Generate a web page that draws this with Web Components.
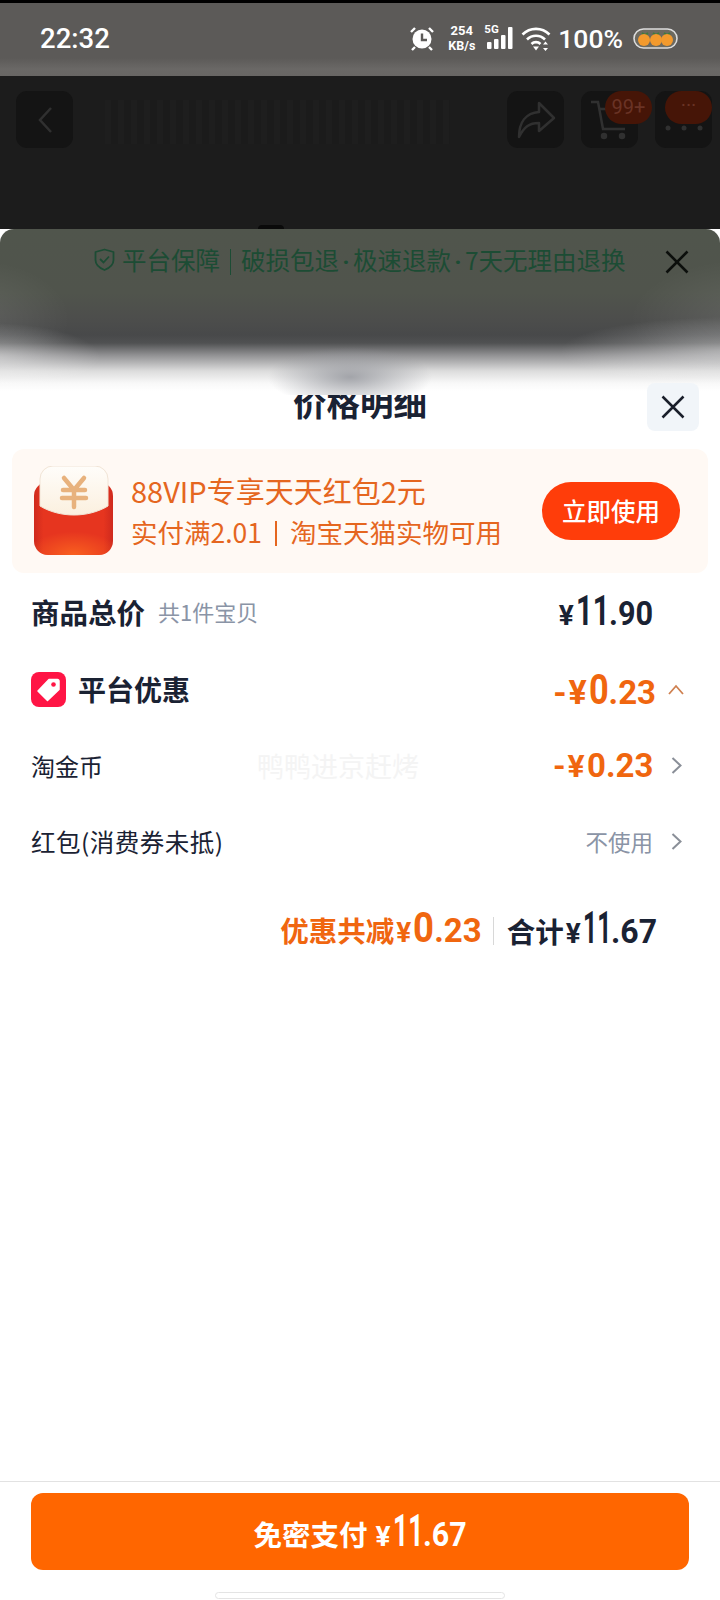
<!DOCTYPE html>
<html lang="zh">
<head>
<meta charset="utf-8">
<title>价格明细</title>
<style>
    html, body { margin: 0; padding: 0; background: #fff; }
    body { font-family: "Noto Sans CJK SC", "Noto Sans", sans-serif; }
    pay-page { width: 720px; height: 1600px; }
</style>
</head>
<body>
<pay-page>
    <status-bar></status-bar>
    <nav-bar></nav-bar>
    <guarantee-bar>平台保障</guarantee-bar>
    <price-sheet>
        <sheet-title>价格明细</sheet-title>
        <coupon-banner></coupon-banner>
        <price-row style="--row-size:28.5px;--row-weight:700;margin:-2px 0 2px">
            <span>商品总价</span>
            <span slot="note">共1件宝贝</span>
            <pay-amount slot="value" yen="¥" whole="11" decimal=".90" wholesize="42" decsize="33" yensize="28" kw=".69" kd=".93" color="#1a2233" style="margin-right:31px"></pay-amount>
        </price-row>
        <price-row style="--row-size:28px;--row-weight:700">
            <tag-icon slot="icon"></tag-icon>
            <span>平台优惠</span>
            <pay-amount slot="value" sign="-" yen="¥" whole="0" decimal=".23" wholesize="43" decsize="33" yensize="34" kw=".8" color="#f0660f"></pay-amount>
            <row-arrow slot="arrow" dir="up" style="margin-left:12px"></row-arrow>
        </price-row>
        <price-row>
            <span>淘金币</span>
            <pay-amount slot="value" sign="-" yen="¥" whole="0.23" wholesize="34" yensize="32" kw=".97" color="#f0660f"></pay-amount>
            <row-arrow slot="arrow"></row-arrow>
            <span slot="mark">鸭鸭进京赶烤</span>
        </price-row>
        <price-row style="--row-size:24.5px;letter-spacing:.5px">
            <span>红包(消费券未抵)</span>
            <span slot="plain">不使用</span>
            <row-arrow slot="arrow"></row-arrow>
        </price-row>
        <price-total></price-total>
    </price-sheet>
    <pay-footer></pay-footer>
</pay-page>

<script>
const CJK = '"Noto Sans CJK SC", "Noto Sans", sans-serif'
const DIGITS = 'Roboto, "Noto Sans CJK SC", sans-serif'

class PayPage extends HTMLElement {
    constructor() {
        super()
        this.root = this.attachShadow({ mode: 'open' })
        this.root.innerHTML = `<style>
            :host { display: flex; flex-direction: column; overflow: hidden; background: #fff; font-family: ${CJK}; }
        </style><slot></slot>`
    }
}

class StatusBar extends HTMLElement {
    constructor() {
        super()
        this.root = this.attachShadow({ mode: 'open' })
        this.root.innerHTML = `<style>
            :host { display: flex; box-sizing: border-box; height: 76px; border-top: 3px solid #000; padding: 0 42px 0 40px;
                align-items: center; justify-content: space-between; color: #fff;
                background: linear-gradient(to bottom, #5c5a58 0, #5c5a58 55px, #6a6866 66px, #686664 100%);
                font-family: Roboto, "Noto Sans", sans-serif; }
            .time { font-size: 27.500px; font-weight: 500; margin-top: -3px; }
            .icons { display: flex; align-items: center; margin-top: -3px; }
            .speed { display: flex; flex-direction: column; align-items: center; font-size: 13px; line-height: 15px; font-weight: 700; margin: 0 11px 0 14px; }
            .speed span + span { font-size: 12.500px; }
            .signal { position: relative; width: 27px; height: 24px; margin-right: 8px; }
            .signal b { position: absolute; left: -2px; top: -2px; font-size: 11.500px; line-height: 11px; font-weight: 700; }
            .pct { font-size: 26.500px; font-weight: 500; margin: 0 10px 0 7px; }
            svg { display: block; }
        </style>
        <span class="time">22:32</span>
        <div class="icons">
            <svg width="24" height="25" viewBox="0 0 24 25">
                <circle cx="12" cy="13" r="9.500" fill="#fff"/>
                <path d="M12 7.500V14h5" fill="none" stroke="#5c5a58" stroke-width="2.400"/>
                <path d="M1 6l4-4M23 6l-4-4M5 21l-3 3M19 21l3 3" stroke="#fff" stroke-width="2.400" fill="none"/>
            </svg>
            <div class="speed"><span>254</span><span>KB/s</span></div>
            <div class="signal">
                <b>5G</b>
                <svg width="27" height="24" viewBox="0 0 27 24" fill="#fff">
                    <rect x="1" y="16" width="4.500" height="7" rx="1"/>
                    <rect x="8" y="13" width="4.500" height="10" rx="1"/>
                    <rect x="15" y="9" width="4.500" height="14" rx="1"/>
                    <rect x="22" y="1" width="4.500" height="22" rx="1"/>
                </svg>
            </div>
            <svg width="30" height="25" viewBox="0 0 30 25" fill="none" stroke="#fff" stroke-width="2.600">
                <path d="M1.500 8.500C9 1 21 1 28.500 8.500"/>
                <path d="M6 13.500c5-5 13-5 18 0"/>
                <path d="M10.500 18c2.500-2.500 6.500-2.500 9 0"/>
                <path d="M12 20.500h6l-3 4z" fill="#fff" stroke="none"/>
                <path d="M24.500 15.500l2.500 3h-5zM24.500 25l2.500-3h-5z" fill="#fff" stroke="none"/>
            </svg>
            <span class="pct">100%</span>
            <svg width="45" height="21" viewBox="0 0 45 21">
                <rect x="1" y="1" width="43" height="19" rx="9.500" fill="#6d6a60" stroke="#ddd" stroke-width="1.600"/>
                <path d="M9 5l3 2 3-2M20 5l3 2 3-2M31 5l3 2 3-2" fill="none" stroke="#3f7a3c" stroke-width="2"/>
                <circle cx="11" cy="12" r="6" fill="#f39a2d"/>
                <circle cx="23" cy="12" r="6" fill="#f39a2d"/>
                <circle cx="34" cy="12" r="6" fill="#f39a2d"/>
            </svg>
        </div>`
    }
}

class NavBar extends HTMLElement {
    constructor() {
        super()
        this.root = this.attachShadow({ mode: 'open' })
        this.root.innerHTML = `<style>
            :host { display: flex; box-sizing: border-box; height: 153px; background: #1c1c1c; padding: 15px 8px 0 16px; gap: 17px; align-items: flex-start; }
            .btn { position: relative; width: 57px; height: 57px; border-radius: 11px; background: #141414; display: flex; align-items: center; justify-content: center; }
            .title { flex: 1; height: 44px; margin: 9px 40px 0 15px;
                background: repeating-linear-gradient(to right, #1e1e1e 0 6px, #1b1b1b 6px 13px); }
            .badge { position: absolute; left: 24px; top: 0; width: 47px; height: 33px; border-radius: 17px; background: #461507; color: #6a3325;
                font: 400 20px/33px Roboto, sans-serif; text-align: center; }
            svg { display: block; }
        </style>
        <div class="btn"><svg width="20" height="30" viewBox="0 0 20 30" fill="none" stroke="#303030" stroke-width="2.500"><path d="M16 3L5 15l11 12"/></svg></div>
        <div class="title"></div>
        <div class="btn"><svg width="44" height="42" viewBox="0 0 44 42" fill="none" stroke="#303030" stroke-width="2.500"><path d="M25 4l15 15-15 13v-8C15 24 10 28 5 38c0-15 7-24 20-25z" stroke-linejoin="round"/></svg></div>
        <div class="btn"><svg width="44" height="46" viewBox="0 0 44 46" fill="none" stroke="#303030" stroke-width="2.500"><path d="M3 5h7l5 27h22"/><path d="M12 12h28"/><circle cx="16" cy="39" r="2" fill="#303030"/><circle cx="34" cy="39" r="2" fill="#303030"/></svg><span class="badge">99+</span></div>
        <div class="btn"><svg width="40" height="46" viewBox="0 0 40 46" fill="#303030"><circle cx="4" cy="31" r="2.500"/><circle cx="20" cy="31" r="2.500"/><circle cx="36" cy="31" r="2.500"/></svg><span class="badge" style="left:10px;line-height:28px">···</span></div>`
    }
}

class GuaranteeBar extends HTMLElement {
    constructor() {
        super()
        this.root = this.attachShadow({ mode: 'open' })
        this.root.innerHTML = `<style>
            :host { display: flex; position: relative; z-index: 1; box-sizing: border-box; height: 166px; margin-bottom: -12px;
                border-radius: 14px 14px 0 0; padding: 19px 31px 0 94px; gap: 7px; align-items: flex-start; color: #1c4c34;
                font-size: 24.500px; line-height: 24px;
                background:
                    radial-gradient(ellipse 110px 34px at -10px 128px, rgba(255,255,255,.42), rgba(255,255,255,0)),
                    radial-gradient(ellipse 170px 34px at 730px 122px, rgba(255,255,255,.38), rgba(255,255,255,0)),
                    radial-gradient(ellipse 100px 60px at -30px 90px, rgba(255,255,255,.1), rgba(255,255,255,0)),
                    radial-gradient(ellipse 120px 60px at 750px 90px, rgba(255,255,255,.1), rgba(255,255,255,0)),
                    radial-gradient(ellipse 82px 30px at 350px 148px, rgba(150,152,158,.85), rgba(150,152,158,0)),
                    linear-gradient(to bottom, #50554c 0, #50544c 64px, #4d4e4c 88px, #48494a 106px, #505152 114px, #909092 126px, #dcdcdc 142px, #f8f8f8 154px, #fff 162px); }
            .txt { white-space: nowrap; }
            .sep { display: inline-block; width: 1px; height: 26px; background: #1c4c34; margin: 0 10px; vertical-align: -5px; }
            .dot { display: inline-block; width: 14px; text-align: center; font-family: Roboto, sans-serif; font-weight: 700; }
            .close { margin: 2px 0 0 auto; }
            .arc { position: absolute; left: 258px; top: -4px; width: 26px; height: 4px; border-radius: 13px 13px 0 0; background: #0a0a0a; }
            svg { display: block; }
        </style>
        <div class="arc"></div>
        <svg width="21" height="23" viewBox="0 0 21 23" fill="none" stroke="#1c4c34" stroke-width="1.800"><path d="M10.500 1.500L19.500 4v8c0 5-4 8-9 10-5-2-9-5-9-10V4z" stroke-linejoin="round"/><path d="M6 11l3.500 3.500L15 8.500"/></svg>
        <span class="txt"><slot></slot><span class="sep"></span>破损包退<span class="dot">·</span>极速退款<span class="dot">·</span>7天无理由退换</span>
        <svg class="close" width="24" height="24" viewBox="0 0 24 24" stroke="#0c0f0c" stroke-width="2.600"><path d="M1.500 1.500l21 21M22.500 1.500l-21 21"/></svg>`
    }
}

class PriceSheet extends HTMLElement {
    constructor() {
        super()
        this.root = this.attachShadow({ mode: 'open' })
        this.root.innerHTML = `<style>
            :host { display: flex; flex-direction: column; flex: 1; background: #fff; }
        </style><slot></slot>`
    }
}

class SheetTitle extends HTMLElement {
    constructor() {
        super()
        this.root = this.attachShadow({ mode: 'open' })
        this.root.innerHTML = `<style>
            :host { display: grid; grid-template-columns: 1fr auto 1fr; height: 48px; padding: 0 21px; align-items: center; color: #1a2233; }
            h1 { grid-column: 2; margin: -11px 0 0; font-size: 33.500px; line-height: 48px; font-weight: 700; }
            .close { position: relative; z-index: 2; justify-self: end; width: 52px; height: 48px; border-radius: 8px; background: #f1f5f9; display: flex; align-items: center; justify-content: center; }
        </style>
        <h1><slot></slot></h1>
        <div class="close"><svg width="24" height="24" viewBox="0 0 24 24" stroke="#1a1f2b" stroke-width="2.500"><path d="M1.500 1.500l21 21M22.500 1.500l-21 21"/></svg></div>`
    }
}

class CouponBanner extends HTMLElement {
    constructor() {
        super()
        this.root = this.attachShadow({ mode: 'open' })
        this.root.innerHTML = `<style>
            :host { display: flex; box-sizing: border-box; height: 124px; margin: 18px 12px 2px; padding: 0 28px 0 22px; border-radius: 12px; background: #fff9f4; align-items: center; }
            .text { flex: 1; margin-left: 18px; color: #e5661f; white-space: nowrap; }
            .one { font-size: 29px; line-height: 40px; }
            .two { font-size: 26.500px; line-height: 40px; margin-top: 2px; }
            .sep { display: inline-block; width: 2px; height: 25px; background: #e5661f; margin: 0 13px; vertical-align: -3px; }
            .use { width: 138px; height: 58px; border-radius: 29px; background: #ff3d0a; color: #fff; font-size: 24.500px; font-weight: 500; line-height: 58px; text-align: center; }
            svg { display: block; flex: none; }
        </style>
        <svg width="79" height="90" viewBox="0 0 79 90">
            <defs>
                <linearGradient id="red" x1="0" y1="0" x2="1" y2="0"><stop offset="0" stop-color="#cf2a1d"/><stop offset=".12" stop-color="#e6351f"/><stop offset=".88" stop-color="#e6351f"/><stop offset="1" stop-color="#cf2a1d"/></linearGradient>
                <radialGradient id="glow" cx=".5" cy="1" r=".6"><stop offset="0" stop-color="#f9601f"/><stop offset="1" stop-color="#f9601f" stop-opacity="0"/></radialGradient>
                <linearGradient id="flap" x1="0" y1="0" x2="0" y2="1"><stop offset="0" stop-color="#fffdfa"/><stop offset="1" stop-color="#fbf0df"/></linearGradient>
            </defs>
            <path d="M0 30a14 14 0 0 1 14-14h51a14 14 0 0 1 14 14v45a14 14 0 0 1-14 14H14A14 14 0 0 1 0 75z" fill="url(#red)"/>
            <path d="M0 50h79v25a14 14 0 0 1-14 14H14A14 14 0 0 1 0 75z" fill="url(#glow)"/>
            <path d="M6 13a13 13 0 0 1 13-13h42a13 13 0 0 1 13 13v27c-10 6-22 9-34 9s-24-3-34-9z" fill="url(#flap)" stroke="#f1e4d6" stroke-width="1"/>
            <path d="M30 12l10 12 10-12M29 24h22M28 32h24M40 24v17" fill="none" stroke="#e8b27d" stroke-width="4.500" stroke-linecap="round" stroke-linejoin="round"/>
        </svg>
        <div class="text">
            <div class="one">88VIP专享天天红包2元</div>
            <div class="two">实付满2.01<span class="sep"></span>淘宝天猫实物可用</div>
        </div>
        <div class="use">立即使用</div>`
    }
}

class PriceRow extends HTMLElement {
    constructor() {
        super()
        this.root = this.attachShadow({ mode: 'open' })
        this.root.innerHTML = `<style>
            :host { display: flex; position: relative; box-sizing: border-box; height: 76px; padding: 0 36px 0 31px; align-items: center; color: #1a2233;
                font-size: var(--row-size, 24px); font-weight: var(--row-weight, 400); white-space: nowrap; }
            .note { font-size: 22px; font-weight: 400; color: #8a94a6; margin-left: 13px; }
            .value { margin-left: auto; display: flex; align-items: center; }
            .plain { font-size: 22.500px; font-weight: 400; color: #8a94a6; letter-spacing: 0; }
            .mark { position: absolute; left: 257px; top: 50%; transform: translateY(-50%); font-size: 27px; font-weight: 400; color: #f4f4f4; }
            ::slotted([slot="arrow"]) { margin-left: 15px; }
        </style>
        <slot name="icon"></slot>
        <slot></slot>
        <span class="note"><slot name="note"></slot></span>
        <span class="mark"><slot name="mark"></slot></span>
        <div class="value">
            <span class="plain"><slot name="plain"></slot></span>
            <slot name="value"></slot>
            <slot name="arrow"></slot>
        </div>`
    }
}

class PayAmount extends HTMLElement {
    constructor() {
        super()
        this.root = this.attachShadow({ mode: 'open' })
    }

    connectedCallback() {
        this._updateRendering()
    }

    _updateRendering() {
        const attr = (name, fallback) => this.getAttribute(name) || fallback
        const yenSize = attr('yensize', 30)
        this.root.innerHTML = `<style>
            :host { display: inline-flex; align-items: baseline; line-height: 1; font-weight: 700; white-space: nowrap; font-family: ${DIGITS}; color: ${attr('color', 'inherit')}; }
            .sign { font-size: ${yenSize}px; margin-right: 2px; }
            .yen { font-size: ${yenSize}px; margin-right: 2px; }
            .whole { font-size: ${attr('wholesize', 42)}px; }
            .dec { font-size: ${attr('decsize', 32)}px; }
            .in { display: inline-block; transform-origin: left center; }
        </style>
        <span class="sign">${attr('sign', '')}</span><span class="yen">${attr('yen', '')}</span>
        <span class="whole"><span class="in">${attr('whole', '')}</span></span>
        <span class="dec"><span class="in">${attr('decimal', '')}</span></span>`
        this._squeeze('.whole', attr('kw', 1))
        this._squeeze('.dec', attr('kd', 1))
    }

    _squeeze(selector, k) {
        const part = this.root.querySelector(selector)
        part.style.width = part.getBoundingClientRect().width * k + 'px'
        part.firstElementChild.style.transform = `scaleX(${k})`
    }
}

class RowArrow extends HTMLElement {
    constructor() {
        super()
        this.root = this.attachShadow({ mode: 'open' })
        const up = this.getAttribute('dir') === 'up'
        this.root.innerHTML = `<style>
            :host { display: flex; width: 16px; justify-content: center; align-items: center; }
            svg { display: block; }
        </style>` + (up
            ? `<svg width="16" height="11" viewBox="0 0 16 11" fill="none" stroke="#cf8050" stroke-width="1.800"><path d="M1 10l7-8 7 8"/></svg>`
            : `<svg width="11" height="17" viewBox="0 0 11 17" fill="none" stroke="#8a8f98" stroke-width="2"><path d="M1.500 1l8 7.500-8 7.500"/></svg>`)
    }
}

class TagIcon extends HTMLElement {
    constructor() {
        super()
        this.root = this.attachShadow({ mode: 'open' })
        this.root.innerHTML = `<style>
            :host { display: block; width: 35px; height: 35px; margin-right: 12px; }
            svg { display: block; }
        </style>
        <svg width="35" height="35" viewBox="0 0 35 35">
            <rect width="35" height="35" rx="8" fill="#ff1545"/>
            <path d="M18 7.500h8.500a1.500 1.500 0 0 1 1.500 1.500v8.500L16.500 28.500 7 19z" fill="#fff" stroke="#fff" stroke-width="1.500" stroke-linejoin="round"/>
            <circle cx="22.500" cy="12.500" r="2.300" fill="#ff1545"/>
        </svg>`
    }
}

class PriceTotal extends HTMLElement {
    constructor() {
        super()
        this.root = this.attachShadow({ mode: 'open' })
        this.root.innerHTML = `<style>
            :host { display: flex; justify-content: flex-end; align-items: center; box-sizing: border-box; height: 60px; margin-top: 19px; padding-right: 63px; font-size: 28.500px; font-weight: 700; white-space: nowrap; }
            .sum { display: flex; align-items: baseline; }
            .off { color: #f0660f; }
            .all { color: #1a2233; }
            .line { width: 1px; height: 28px; background: #d8d8d8; margin: 6px 13px 0 11px; }
        </style>
        <div class="sum off">优惠共减<pay-amount yen="¥" whole="0" decimal=".23" wholesize="43" decsize="33" yensize="28" kw=".85"></pay-amount></div>
        <div class="line"></div>
        <div class="sum all">合计<pay-amount yen="¥" whole="11" decimal=".67" wholesize="44" decsize="33" yensize="28" kw=".56" kd=".97"></pay-amount></div>`
    }
}

class PayFooter extends HTMLElement {
    constructor() {
        super()
        this.root = this.attachShadow({ mode: 'open' })
        this.root.innerHTML = `<style>
            :host { display: flex; flex-direction: column; align-items: center; box-sizing: border-box; height: 119px; border-top: 1.500px solid #e2e2e2; padding-top: 11px; background: #fff; }
            .pay { display: flex; align-items: baseline; justify-content: center; box-sizing: border-box; width: 658px; height: 77px; padding-top: 16px; border-radius: 12px; background: #ff6600; color: #fff; font-size: 28.500px; font-weight: 700; }
            pay-amount { margin-left: 6px; }
            .home { width: 288px; height: 5px; margin-top: 22px; border: 1px solid #e4e4e4; border-radius: 5px; }
        </style>
        <div class="pay">免密支付<pay-amount yen="¥" whole="11" decimal=".67" wholesize="44" decsize="33" yensize="28" kw=".6" kd=".92"></pay-amount></div>
        <div class="home"></div>`
    }
}

customElements.define('pay-amount', PayAmount)
customElements.define('row-arrow', RowArrow)
customElements.define('tag-icon', TagIcon)
customElements.define('pay-page', PayPage)
customElements.define('status-bar', StatusBar)
customElements.define('nav-bar', NavBar)
customElements.define('guarantee-bar', GuaranteeBar)
customElements.define('price-sheet', PriceSheet)
customElements.define('sheet-title', SheetTitle)
customElements.define('coupon-banner', CouponBanner)
customElements.define('price-row', PriceRow)
customElements.define('price-total', PriceTotal)
customElements.define('pay-footer', PayFooter)
</script>
</body>
</html>
